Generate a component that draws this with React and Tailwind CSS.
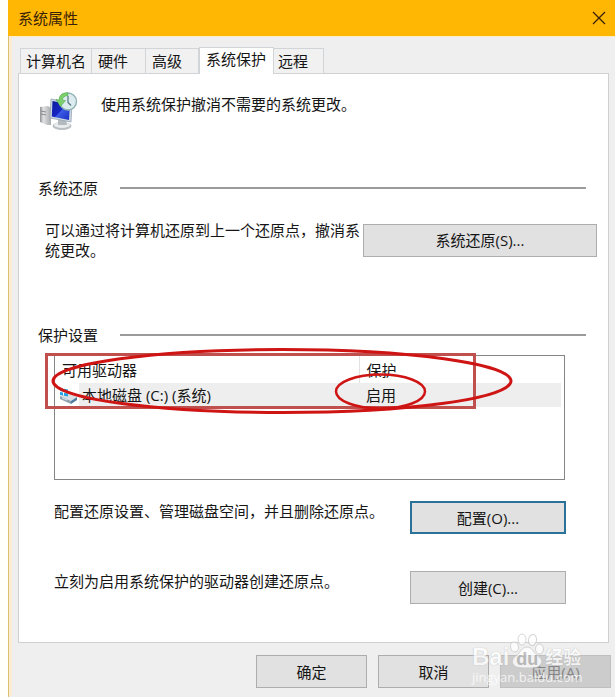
import React, { useState } from 'react';
import clsx from 'clsx';

const tabs = [
  { id: 'name', label: '计算机名', width: 'w-[72px]' },
  { id: 'hardware', label: '硬件', width: 'w-[54px]' },
  { id: 'advanced', label: '高级', width: 'w-[53px]' },
  { id: 'protection', label: '系统保护', width: 'w-[75px]' },
  { id: 'remote', label: '远程', width: 'w-[50px]' },
];

const drives = [{ name: '本地磁盘 (C:) (系统)', status: '启用' }];

const DialogButton = ({ className, children, ...props }) => (
  <button
    type="button"
    className={clsx('h-[33px] shrink-0 border text-center leading-5', className)}
    {...props}
  >
    {children}
  </button>
);

const SectionTitle = ({ className, children }) => (
  <div className={clsx('flex items-center gap-[22px] pl-[19px] pr-[22px]', className)}>
    <h2>{children}</h2>
    <div className="h-0.5 flex-1 bg-[#9b9b9b]" />
  </div>
);

const RestoreIcon = () => (
  <svg width="40" height="40" viewBox="0 0 40 40" className="shrink-0" aria-hidden="true">
    <defs>
      <linearGradient id="screen" x1="0" y1="0" x2="1" y2="1">
        <stop offset="0" stopColor="#0c1a9c" />
        <stop offset="0.5" stopColor="#1526c4" />
        <stop offset="0.52" stopColor="#3b5be6" />
        <stop offset="1" stopColor="#1a2fc0" />
      </linearGradient>
      <linearGradient id="tower" x1="0" y1="0" x2="1" y2="0">
        <stop offset="0" stopColor="#8d8f91" />
        <stop offset="0.3" stopColor="#e0e2e3" />
        <stop offset="1" stopColor="#a9acae" />
      </linearGradient>
    </defs>
    <path d="M0 15l8-1 3 2v17l-4 0-7-3z" fill="url(#tower)" />
    <path d="M1 19l5 1M1 22l5 1" stroke="#777" strokeWidth="0.800" />
    <ellipse cx="22" cy="34" rx="9.500" ry="4" fill="#b9bec1" />
    <ellipse cx="22" cy="33" rx="8" ry="3" fill="#e9eced" />
    <path d="M18 27h8l1 6h-9z" fill="#b4babd" />
    <path d="M11 7l21 4-1 19-21-4z" fill="#cdd8e2" stroke="#97a5b3" strokeWidth="0.800" />
    <path d="M12.500 9l17.500 3.500-1 15.500-17.200-3.500z" fill="url(#screen)" />
    <circle cx="28" cy="9.500" r="8.500" fill="#dcebee" stroke="#8fb3b5" strokeWidth="1.400" />
    <path d="M28 4v6.500l3 3" fill="none" stroke="#54757f" strokeWidth="1.200" />
    <path d="M28 1c-6-1-9 3-9 7l-3-.5 4.500 7 5-6-3-.3c0-3 2-4.500 5.500-4.500z" fill="#7ccf6b" stroke="#45a548" strokeWidth="0.500" />
  </svg>
);

const DriveIcon = () => (
  <svg width="20" height="20" viewBox="0 0 20 20" className="shrink-0" aria-hidden="true">
    <path d="M1 11l7-3 10 4-6 4z" fill="#d8dee2" />
    <path d="M1 11l11 5v3L1 14z" fill="#8fa0ac" />
    <path d="M12 16l6-4v3l-6 4z" fill="#4d7ba0" />
    <path d="M1 3l3 .5v3L1 6zM5 3.700l4 .8v3l-4-.7zM1 7l3 .5v3L1 10zM5 7.800l4 .7v3l-4-.8z" fill="#22a2e4" />
    <path d="M3 13l5 2" stroke="#cfe9f7" strokeWidth="1" />
  </svg>
);

// hand-drawn highlight around the drive that has to be enabled
const Highlight = () => (
  <svg
    width="480"
    height="72"
    viewBox="0 0 480 72"
    fill="none"
    className="pointer-events-none absolute -left-3.5 -top-3"
    aria-hidden="true"
  >
    <rect x="5.500" y="10.500" width="428" height="53" stroke="#c0504d" strokeWidth="3" />
    <ellipse cx="241" cy="37" rx="229" ry="31.500" stroke="#cf1414" strokeWidth="3" />
    <ellipse cx="339.500" cy="47.500" rx="44.500" ry="17" stroke="#cf1414" strokeWidth="2.500" />
  </svg>
);

const Watermark = () => (
  <div className="pointer-events-none absolute bottom-3 right-7 w-[115px] text-white opacity-75">
    <div className="flex items-end">
      <span className="font-['Liberation_Sans',sans-serif] text-2xl font-bold leading-6 [text-shadow:0_0_1px_#999]">
        Bai
      </span>
      <div className="relative h-9 w-9 shrink-0">
        <svg width="36" height="36" viewBox="0 0 36 36" fill="#fff" stroke="#c8c8c8" strokeWidth="1" aria-hidden="true">
          <ellipse cx="13" cy="6.500" rx="4" ry="5.500" />
          <ellipse cx="23.500" cy="7" rx="4" ry="5.500" transform="rotate(10 23.500 7)" />
          <ellipse cx="5.500" cy="14" rx="4" ry="5" transform="rotate(-10 5.500 14)" />
          <ellipse cx="30.500" cy="16" rx="4" ry="5" />
          <path d="M18 14c5 0 6 5 10 8s6 5 4 9-7 4-14 4-12 0-14-4 1-7 4-9 5-8 10-8z" />
        </svg>
        <span className="absolute inset-x-0 bottom-0 text-center font-['Liberation_Sans',sans-serif] text-lg font-bold leading-5 text-[#b0b0b0]">
          du
        </span>
      </div>
      <span className="whitespace-nowrap text-lg font-bold leading-6 [text-shadow:0_0_1px_#999]">经验</span>
    </div>
    <div className="text-[13px] leading-4">jingyan.baidu.com</div>
  </div>
);

export default function App() {
  const [active, setActive] = useState('protection');

  return (
    <div className="min-h-screen bg-[#fffffb] pl-2 font-['Open_Sans','Noto_Sans_CJK_SC',sans-serif] text-[15px] leading-5 text-[#151515]">
      <div className="relative flex min-h-screen flex-col bg-[#efefef]">
        <header className="flex h-9 items-center justify-between bg-[#ffb703] pl-2.5 pr-2 text-[#3a2208]">
          <h1>系统属性</h1>
          <button type="button" aria-label="关闭" className="flex size-4 items-center justify-center">
            <svg width="14" height="14" viewBox="0 0 14 14" stroke="#3a2208" strokeWidth="1.300" aria-hidden="true">
              <path d="M1 1l12 12M13 1L1 13" />
            </svg>
          </button>
        </header>

        <div className="flex-1 border-l border-[#d9c06a]">
          <div className="min-h-full border-l-3 border-t border-l-[#fdebd3] border-t-[#fbeec4] px-1.5 pb-2 pt-2.5">
            <div role="tablist" className="relative -mb-px flex h-[27px] items-end pl-0.5">
              {tabs.map((tab) => (
                <button
                  key={tab.id}
                  type="button"
                  role="tab"
                  aria-selected={active === tab.id}
                  onClick={() => setActive(tab.id)}
                  className={clsx(
                    'whitespace-nowrap border-[#d2d5d7] text-left',
                    tab.width,
                    active === tab.id
                      ? 'h-[27px] border-x border-t bg-white pb-1 pl-1.5'
                      : 'h-[26px] border-y border-r bg-[#f1f1f1] pl-1.5 first:border-l first:pl-[5px] last:pl-1',
                  )}
                >
                  {tab.label}
                </button>
              ))}
            </div>

            <main role="tabpanel" className="border border-[#d0d0d0] bg-white pb-[38px]">
              <div className="flex items-start gap-[21px] pl-[21px] pt-[18px]">
                <RestoreIcon />
                <p className="leading-6">使用系统保护撤消不需要的系统更改。</p>
              </div>

              <SectionTitle className="mt-[46px]">系统还原</SectionTitle>
              <div className="mt-[22px] flex items-center pl-[26px] pr-[11px]">
                <p className="min-w-0 flex-1">可以通过将计算机还原到上一个还原点，撤消系统更改。</p>
                <DialogButton className="w-[234px] border-[#adadad] bg-[#e1e1e1]">系统还原(S)...</DialogButton>
              </div>

              <SectionTitle className="mt-[65px]">保护设置</SectionTitle>
              <div className="relative ml-[35px] mr-[43px] mt-2.5 h-[125px] border border-[#858585] pl-1 pr-[3px]">
                <table className="w-full table-fixed border-collapse text-left">
                  <thead>
                    <tr className="h-[27px]">
                      <th className="w-[300px] border-r border-[#e2e2e2] pl-[3px] font-normal">可用驱动器</th>
                      <th className="pl-[7px] font-normal">保护</th>
                    </tr>
                  </thead>
                  <tbody>
                    {drives.map((drive) => (
                      <tr key={drive.name}>
                        <td className="p-0">
                          <div className="flex items-center">
                            <DriveIcon />
                            <span className="flex-1 bg-[#eeeeee] pl-[3px] leading-6">{drive.name}</span>
                          </div>
                        </td>
                        <td className="bg-[#eeeeee] pl-[7px] leading-6">{drive.status}</td>
                      </tr>
                    ))}
                  </tbody>
                </table>
                <Highlight />
              </div>

              <div className="mt-[21px] flex items-start justify-between pl-[35px] pr-[42px]">
                <p>配置还原设置、管理磁盘空间，并且删除还原点。</p>
                <DialogButton className="w-[156px] border-2 border-[#2b7199] bg-[#e1e1e1]">配置(O)...</DialogButton>
              </div>
              <div className="mt-[37px] flex items-start justify-between pl-[35px] pr-[42px]">
                <p>立刻为启用系统保护的驱动器创建还原点。</p>
                <DialogButton className="w-[156px] border-[#adadad] bg-[#e1e1e1]">创建(C)...</DialogButton>
              </div>
            </main>

            <footer className="-mr-0.5 mt-3 flex justify-end gap-[11px]">
              <DialogButton className="w-[111px] border-[#adadad] bg-[#e1e1e1]">确定</DialogButton>
              <DialogButton className="w-[111px] border-[#adadad] bg-[#e1e1e1]">取消</DialogButton>
              <DialogButton disabled className="w-[111px] border-[#bfbfbf] bg-[#cccccc] text-[#858585]">
                应用(A)
              </DialogButton>
            </footer>
          </div>
        </div>

        <Watermark />
      </div>
    </div>
  );
}
